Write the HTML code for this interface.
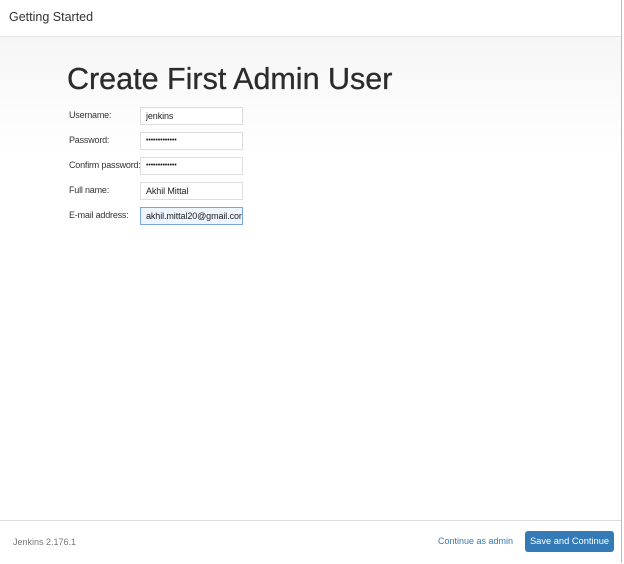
<!DOCTYPE html>
<html><head><style>
body{margin:0;width:624px;height:563px;overflow:hidden;background:#fff;font-family:"Liberation Sans",sans-serif;position:relative}
.frame{position:absolute;left:0;top:0;width:621px;height:563px;border-right:1px solid #bbb}
.hdr{position:absolute;left:0;top:0;width:621px;height:36px;border-bottom:1px solid #e5e5e5}
.hdr span{position:absolute;left:9px;top:10px;font-size:12.5px;color:#333}
.body{position:absolute;left:0;top:37px;width:621px;height:120px;background:linear-gradient(#f6f6f6,#fff)}
h1{position:absolute;left:67px;top:62px;margin:0;font-size:30.5px;font-weight:normal;color:#2b2b2b;-webkit-text-stroke:0.3px #2b2b2b}
.lbl{position:absolute;left:69px;font-size:9px;color:#333;letter-spacing:-0.2px}
.in{position:absolute;left:140px;border:1px solid #ddd;background:#fff;font-size:9px;line-height:16px;padding-left:5px;box-sizing:border-box;width:103px;height:18px;color:#222;overflow:hidden;white-space:nowrap;letter-spacing:-0.1px}
.ft{position:absolute;left:0;top:520px;width:621px;height:43px;border-top:1px solid #ddd}
.ver{position:absolute;left:13px;top:537px;font-size:9px;color:#777}
.ca{position:absolute;left:438px;top:536px;font-size:9px;color:#337ab7}
.btn{position:absolute;left:525px;top:531px;width:89px;height:21px;background:#337ab7;border-radius:3px;color:#fff;font-size:9.3px;line-height:21px;text-align:center}
</style></head><body>
<div class="frame"></div>
<div class="body"></div>
<div class="hdr"><span>Getting Started</span></div>
<h1>Create First Admin User</h1>
<div class="lbl" style="top:110px">Username:</div><div class="in" style="top:107px">jenkins</div>
<div class="lbl" style="top:135px">Password:</div><div class="in" style="top:132px;font-size:7px">•••••••••••••</div>
<div class="lbl" style="top:160px">Confirm password:</div><div class="in" style="top:157px;font-size:7px">•••••••••••••</div>
<div class="lbl" style="top:185px">Full name:</div><div class="in" style="top:182px">Akhil Mittal</div>
<div class="lbl" style="top:210px">E-mail address:</div><div class="in" style="top:207px;border-color:#7aa7d9;background:#eef5ff">akhil.mittal20@gmail.com</div>
<div class="ft"></div>
<div class="ver">Jenkins 2.176.1</div>
<div class="ca">Continue as admin</div>
<div class="btn">Save and Continue</div>
</body></html>
